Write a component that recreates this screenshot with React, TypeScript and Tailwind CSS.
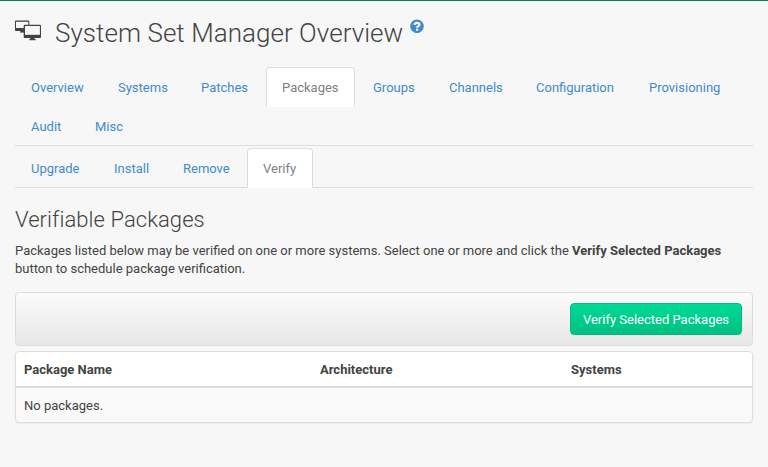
import React from "react";

const tabs = [
  ["Overview", "w-[85px]"], ["Systems", "w-[81px]"], ["Patches", "w-[79px]"], ["Packages", "w-[89px]"],
  ["Groups", "w-[74px]"], ["Channels", "w-[85px]"], ["Configuration", "w-[111px]"], ["Provisioning", "w-[104px]"],
  ["Audit", "w-[62px]"], ["Misc", "w-[60px]"],
];
const subTabs = [["Upgrade", "w-[81px]"], ["Install", "w-[67px]"], ["Remove", "w-[78px]"], ["Verify", "w-[66px]"]];

function Tabs({ items, active, className }: { items: string[][]; active: string; className: string }) {
  return (
    <ul className={`flex flex-wrap border-b border-[#dddddd] ${className}`}>
      {items.map(([label, width]) => (
        <li key={label} className="-mb-px mr-[2px]">
          <a
            className={`block h-10 whitespace-nowrap rounded-t border px-[15px] pt-[11px] leading-[18px] ${width} ${
              label === active ? "border-[#dddddd] border-b-white bg-white text-[#808080]" : "border-transparent text-[#428bca]"
            }`}
          >
            {label}
          </a>
        </li>
      ))}
    </ul>
  );
}

export default function App() {
  return (
    <main className="h-[467px] border-t border-[#00845c] bg-[#f7f7f7] px-[15px] font-['Roboto',sans-serif] text-[13px] leading-[18px] text-[#434343]">
      <header className="flex h-[66px] items-start">
        <svg className="mt-[19px] h-[21px] w-[26px] shrink-0" viewBox="0 0 26 21">
          <rect x="0" y="0.6" width="14.3" height="10.4" rx="0.8" fill="#434343" />
          <rect x="1" y="1.8" width="12.3" height="6.2" fill="#f7f7f7" />
          <path d="M5.2 10.8h4v1.8h-4z" fill="#434343" />
          <rect x="8.7" y="4.8" width="17.3" height="13.2" rx="0.9" fill="#434343" />
          <rect x="10" y="6" width="14.9" height="8.8" fill="#f7f7f7" />
          <path d="M15.2 18h4.4v1h1v1.2h-6.2V19h0.8z" fill="#434343" />
        </svg>
        <h1 className="ml-[14px] mt-[17px] whitespace-nowrap text-[26px] font-light leading-[30px] tracking-[0.04px]">System Set Manager Overview</h1>
        <svg className="ml-[7px] mt-[18px] h-[14px] w-[14px]" viewBox="0 0 14 14">
          <circle cx="7" cy="7.3" r="6.8" fill="#428bca" />
          <path d="M4.5 5.8C4.8 3.2 9.4 3.2 9.4 5.6 9.4 7.2 7.1 7.1 7.1 8.8M7.1 9.7v2.1" fill="none" stroke="#f7f7f7" strokeWidth="2.2" />
        </svg>
      </header>
      <Tabs items={tabs} active="Packages" className="h-[79px]" />
      <Tabs items={subTabs} active="Verify" className="mt-[2px] h-10" />
      <h2 className="mt-[19px] text-[22px] font-light leading-[26px] tracking-[0.06px]">Verifiable Packages</h2>
      <p className="mt-[9px]">
        Packages listed below may be verified on one or more systems. Select one or more and click the <b>Verify Selected Packages</b><br />
        button to schedule package verification.
      </p>
      <div className="mt-[14px] flex h-[54px] items-center justify-end rounded border border-[#dddddd] bg-linear-to-b from-[#fbfbfb] to-[#e8e8e8] pr-[10px]">
        <button className="h-8 w-[172px] rounded border border-[#00bc7f] bg-linear-to-b from-[#00db97] to-[#00c081] pt-[2px] text-white">Verify Selected Packages</button>
      </div>
      <section className="mt-[5px] h-[72px] rounded border border-[#dddddd] bg-[#f9f9f9] shadow-xs">
        <div className="flex h-9 items-center rounded-t-[3px] border-b-2 border-[#dddddd] bg-white px-2 pt-[2px] font-bold">
          <span className="w-[296px]">Package Name</span><span className="w-[251px]">Architecture</span><span>Systems</span>
        </div>
        <div className="flex h-[34px] items-center px-2 pt-[2px]">No packages.</div>
      </section>
    </main>
  );
}
